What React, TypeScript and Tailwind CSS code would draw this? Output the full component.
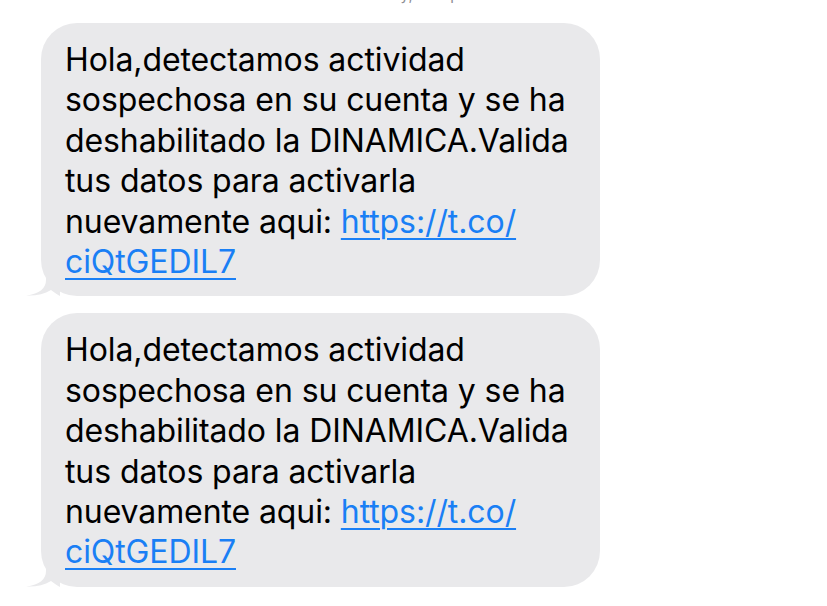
const lines = [
  'Hola,detectamos actividad',
  'sospechosa en su cuenta y se ha',
  'deshabilitado la DINAMICA.Valida',
  'tus datos para activarla',
]

function Tail() {
  return (
    <svg
      className="absolute bottom-0 -left-[15px]"
      width="34"
      height="30"
      viewBox="0 0 34 30"
    >
      <path
        d="M20 0 L20 14 C20 22 14 28 0 29.5 C10 30 18 28 25 24 C28 26 32 29 34 30 L34 0 Z"
        fill="#e9e9eb"
      />
    </svg>
  )
}

function Bubble() {
  return (
    <div className="relative w-[559px] rounded-[36px] bg-[#e9e9eb] pl-6 pr-4 pt-[17px] pb-[14px]">
      <Tail />
      <p className="relative text-[32px] leading-[40.4px] tracking-[-0.1px] text-black">
        {lines.map((l) => (
          <span key={l} className="block">{l}</span>
        ))}
        <span className="block">
          nuevamente aqui:{' '}
          <a className="text-[#1a7ff5] underline decoration-[2px] underline-offset-[5px]" href="#">
            https://t.co/
          </a>
        </span>
        <span className="block">
          <a className="text-[#1a7ff5] underline decoration-[2px] underline-offset-[5px]" href="#">
            ciQtGEDIL7
          </a>
        </span>
      </p>
    </div>
  )
}

export default function App() {
  return (
    <div
      className="relative h-[606px] w-[827px] overflow-hidden bg-white"
      style={{ fontFamily: 'Inter, "Liberation Sans", sans-serif' }}
    >
      {/* clipped timestamp at the very top */}
      <div className="-mt-[16px] h-[39px] text-center text-[15px] text-[#8e8e93]">
        <span className="ml-[35px]">Hoy, 9:41 p.m.</span>
      </div>
      <div className="flex flex-col gap-[17px] pl-[41px]">
        <Bubble />
        <Bubble />
      </div>
    </div>
  )
}
